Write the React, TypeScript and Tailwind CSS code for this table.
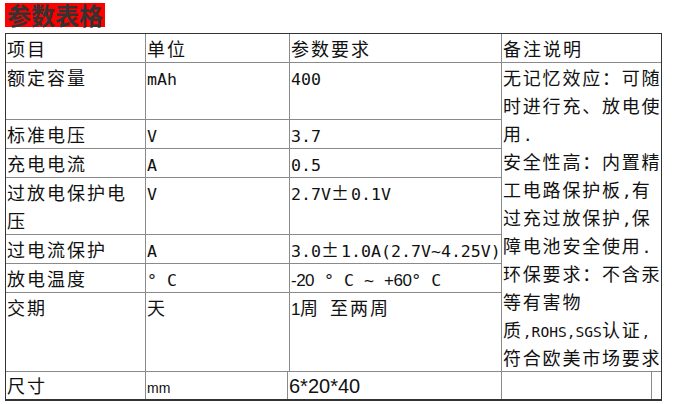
import * as React from "react";

// ASCII runs in the reference are half-width monospace (10px per glyph)
function M({ children, small }: { children: React.ReactNode; small?: boolean }) {
  return (
    <span
      className={
        small
          ? "font-['DejaVu_Sans_Mono',monospace] text-[14.6px] tracking-normal whitespace-pre"
          : "font-['DejaVu_Sans_Mono',monospace] text-[16.6px] tracking-normal whitespace-pre"
      }
    >
      {children}
    </span>
  );
}

function A({ children }: { children: React.ReactNode }) {
  return (
    <span className="font-['Liberation_Sans',Arial,sans-serif] text-[17px] tracking-[-0.5px] whitespace-pre">
      {children}
    </span>
  );
}

function Cell({ children, className = "" }: { children?: React.ReactNode; className?: string }) {
  return <div className={"bg-white pl-px overflow-hidden whitespace-nowrap " + className}>{children}</div>;
}

const notes: React.ReactNode[] = [
  "无记忆效应：可随",
  "时进行充、放电使",
  <>用<M>.</M></>,
  "安全性高：内置精",
  <>工电路保护板<M>,</M>有</>,
  <>过充过放保护<M>,</M>保</>,
  <>障电池安全使用<M>.</M></>,
  "环保要求：不含汞",
  "等有害物",
  <>质<M small>,ROHS,SGS</M>认证<M small>,</M></>,
  "符合欧美市场要求",
];

export default function App() {
  return (
    <div className="min-h-[404px] bg-white pl-[5px] pt-[3px] text-[#111] font-['Noto_Sans_CJK_SC',sans-serif] text-[18px] tracking-[2px] leading-[28px]">
      <div className="w-[100px] bg-[#ff0000] pl-[2px] text-[24px] font-bold leading-[24px] tracking-normal text-[#333]">
        参数表格
      </div>

      <div className="mt-[6px] flex w-fit flex-col gap-px border border-b-2 border-[#333] bg-[#8a8a8a]">
        <div className="grid grid-cols-[139px_143px_211px_159px] grid-rows-[28px_56px_28px_28px_56px_28px_28px_78px] gap-px">
          <Cell>项目</Cell>
          <Cell>单位</Cell>
          <Cell>参数要求</Cell>
          <Cell>备注说明</Cell>

          <Cell>额定容量</Cell>
          <Cell><M>mAh</M></Cell>
          <Cell><M>400</M></Cell>
          <Cell className="row-span-7 tracking-[1.8px]">
            {notes.map((line, i) => (
              <div key={i} className="h-[28px]">{line}</div>
            ))}
          </Cell>

          <Cell>标准电压</Cell>
          <Cell><M>V</M></Cell>
          <Cell><M>3.7</M></Cell>

          <Cell>充电电流</Cell>
          <Cell><M>A</M></Cell>
          <Cell><M>0.5</M></Cell>

          <Cell>
            <div>过放电保护电</div>
            <div>压</div>
          </Cell>
          <Cell><M>V</M></Cell>
          <Cell><M>2.7V</M>±<M>0.1V</M></Cell>

          <Cell>过电流保护</Cell>
          <Cell><M>A</M></Cell>
          <Cell><M>3.0</M>±<M>1.0A(2.7V~4.25V)</M></Cell>

          <Cell>放电温度</Cell>
          <Cell><M>° C</M></Cell>
          <Cell><A>-20</A><M> ° C ~ </M><A>+60</A><M>° C</M></Cell>

          <Cell>交期</Cell>
          <Cell>天</Cell>
          <Cell><A>1</A>周<M> </M>至两周</Cell>
        </div>

        <div className="grid h-[27px] grid-cols-[139px_141px_213px_149px_9px] gap-px leading-[27px]">
          <Cell>尺寸</Cell>
          <Cell>
            <span className="font-['Liberation_Sans',Arial,sans-serif] text-[14px] tracking-normal">mm</span>
          </Cell>
          <Cell>
            <span className="font-['Liberation_Sans',Arial,sans-serif] text-[20px] tracking-normal">6*20*40</span>
          </Cell>
          <Cell />
          <Cell />
        </div>
      </div>
    </div>
  );
}
